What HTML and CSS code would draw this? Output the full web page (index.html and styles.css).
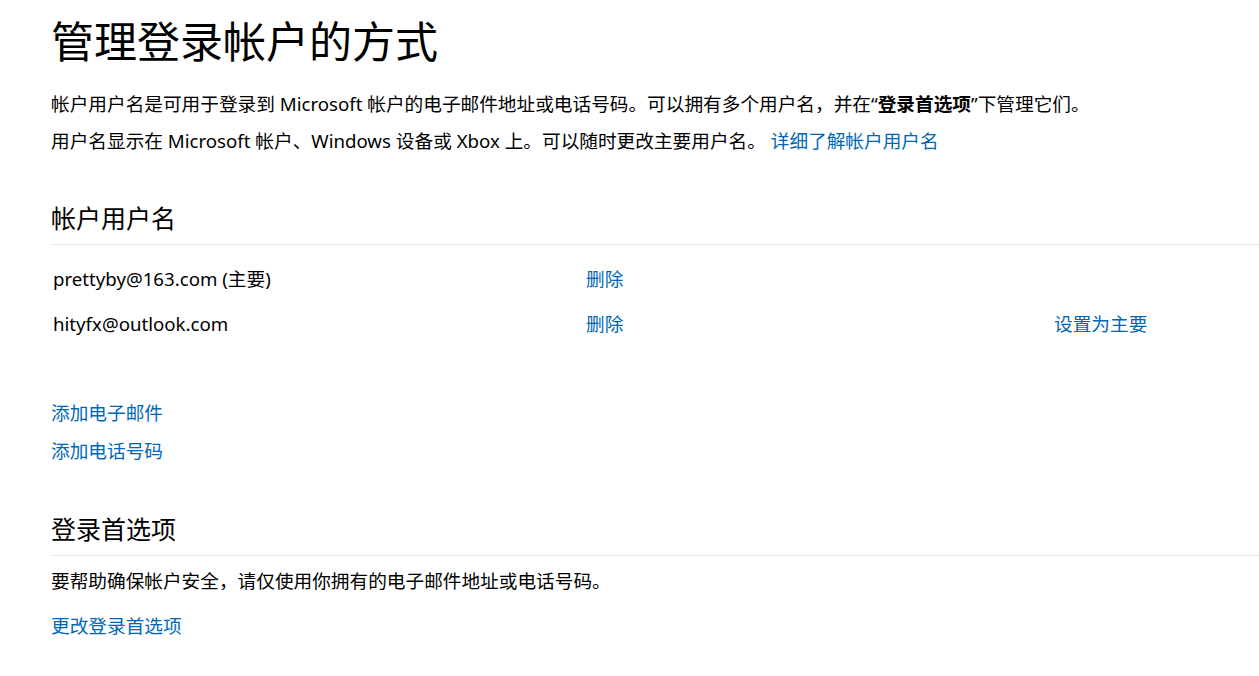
FILE: index.html
```html
<!DOCTYPE html>
<html lang="zh-CN">
<head>
<meta charset="utf-8">
<title>管理登录帐户的方式</title>
<link rel="stylesheet" href="styles.css">
</head>
<body>
<main class="page">
  <h1 class="title">管理登录帐户的方式</h1>
  <p class="intro intro-first">帐户用户名是可用于登录到 Microsoft 帐户的电子邮件地址或电话号码。可以拥有多个用户名，并在“<b>登录首选项</b>”下管理它们。</p>
  <p class="intro">用户名显示在 Microsoft 帐户、Windows 设备或 Xbox 上。可以随时更改主要用户名。 <a class="link" href="#">详细了解帐户用户名</a></p>

  <section class="section">
    <h2 class="section-title">帐户用户名</h2>
    <div class="aliases">
      <div class="alias-row">
        <span class="alias-name">prettyby@163.com (主要)</span>
        <a class="link" href="#">删除</a>
        <span></span>
      </div>
      <div class="alias-row">
        <span class="alias-name">hityfx@outlook.com</span>
        <a class="link" href="#">删除</a>
        <a class="link" href="#">设置为主要</a>
      </div>
    </div>
    <div class="add-links">
      <a class="link" href="#">添加电子邮件</a>
      <a class="link" href="#">添加电话号码</a>
    </div>
  </section>

  <section class="section section-prefs">
    <h2 class="section-title">登录首选项</h2>
    <p class="pref-text">要帮助确保帐户安全，请仅使用你拥有的电子邮件地址或电话号码。</p>
    <a class="link pref-link" href="#">更改登录首选项</a>
  </section>
</main>
</body>
</html>
```
FILE: styles.css
```css
html, body {
  margin: 0;
  padding: 0;
  background: #fff;
  overflow: hidden;
}
body {
  font-family: "Noto Sans", "Noto Sans CJK SC", sans-serif;
  color: #000;
  font-size: 18.67px;
}
.page {
  padding: 11px 0 0 51px;
}
.title {
  margin: 0;
  font-size: 43px;
  font-weight: 400;
  line-height: 56px;
  font-family: "Noto Sans CJK SC", sans-serif;
}
.intro {
  margin: 0;
  line-height: 37px;
}
.intro-first {
  margin-top: 18px;
}
.intro b {
  font-weight: 700;
}
.link {
  color: #0067b8;
  text-decoration: none;
}
.section {
  margin-top: 40px;
}
.section-title {
  margin: 0;
  font-size: 25px;
  font-weight: 400;
  line-height: 36px;
  padding-bottom: 9px;
  border-bottom: 1px solid #e6e6e6;
  font-family: "Noto Sans CJK SC", sans-serif;
}
.aliases {
  padding-top: 11px;
}
.alias-row {
  display: grid;
  grid-template-columns: 535px 468px auto;
  line-height: 45px;
}
.alias-name {
  padding-left: 2px;
}
.add-links {
  display: flex;
  flex-direction: column;
  align-items: flex-start;
  margin-top: 48px;
  line-height: 38px;
}
.section-prefs {
  margin-top: 40px;
}
.pref-text {
  margin: 10px 0 0;
  line-height: 30px;
}
.pref-link {
  display: inline-block;
  margin-top: 15px;
  line-height: 30px;
}
```
